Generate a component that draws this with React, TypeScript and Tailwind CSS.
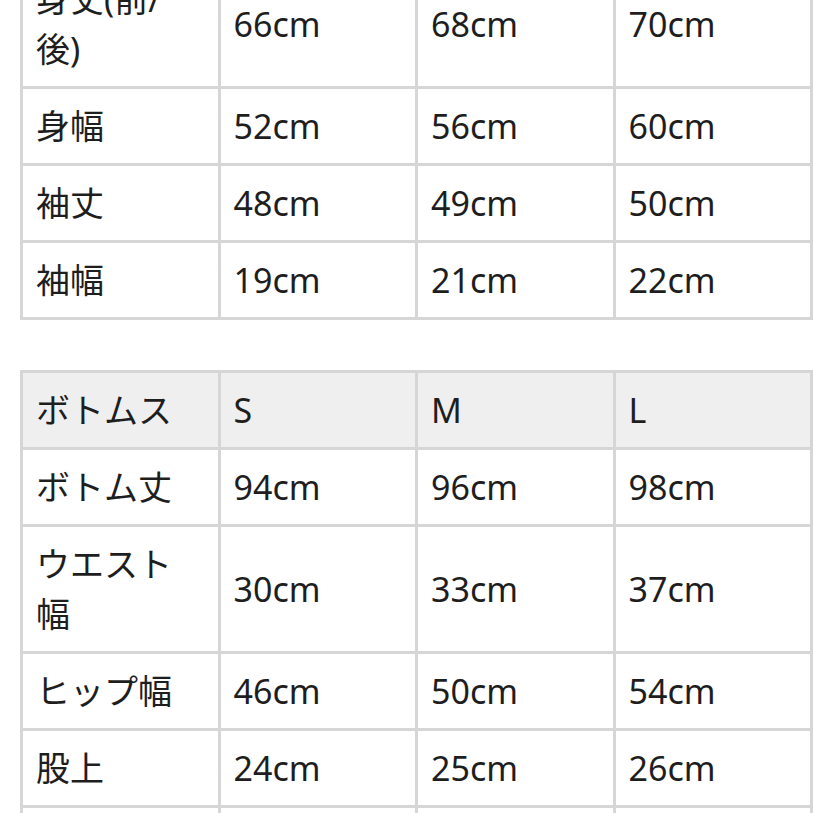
import React from "react";

type Row = { label: React.ReactNode; s: string; m: string; l: string };

const top: Row[] = [
  { label: <>身丈(前/<br />後)</>, s: "66cm", m: "68cm", l: "70cm" },
  { label: "身幅", s: "52cm", m: "56cm", l: "60cm" },
  { label: "袖丈", s: "48cm", m: "49cm", l: "50cm" },
  { label: "袖幅", s: "19cm", m: "21cm", l: "22cm" },
];

const bottom: Row[] = [
  { label: "ボトム丈", s: "94cm", m: "96cm", l: "98cm" },
  { label: <>ウエスト<br />幅</>, s: "30cm", m: "33cm", l: "37cm" },
  { label: "ヒップ幅", s: "46cm", m: "50cm", l: "54cm" },
  { label: "股上", s: "24cm", m: "25cm", l: "26cm" },
  { label: "\u00a0", s: "\u00a0", m: "\u00a0", l: "\u00a0" },
];

function Cell({ children, head }: { children: React.ReactNode; head?: boolean }) {
  return (
    <div
      className={`${head ? "bg-[#efefef]" : "bg-white"} flex items-center px-[13px] py-[12px] text-[34px] leading-[50px] text-[#1e1e1e]`}
    >
      <div>{children}</div>
    </div>
  );
}

function Table({ rows, header }: { rows: Row[]; header?: Row }) {
  return (
    <div className="grid grid-cols-4 gap-[3px] bg-[#d6d6d6] p-[3px]">
      {header && (
        <>
          <Cell head>{header.label}</Cell>
          <Cell head>{header.s}</Cell>
          <Cell head>{header.m}</Cell>
          <Cell head>{header.l}</Cell>
        </>
      )}
      {rows.map((r, i) => (
        <React.Fragment key={i}>
          <Cell>{r.label}</Cell>
          <Cell>{r.s}</Cell>
          <Cell>{r.m}</Cell>
          <Cell>{r.l}</Cell>
        </React.Fragment>
      ))}
    </div>
  );
}

export default function App() {
  return (
    <div
      className="w-[813px] h-[813px] overflow-hidden bg-white"
      style={{ fontFamily: '"Noto Sans", "Noto Sans CJK JP", sans-serif' }}
    >
      <div className="mt-[-41px] ml-[20px] flex flex-col gap-[50px]">
        <Table rows={top} />
        <Table rows={bottom} header={{ label: "ボトムス", s: "S", m: "M", l: "L" }} />
      </div>
    </div>
  );
}
